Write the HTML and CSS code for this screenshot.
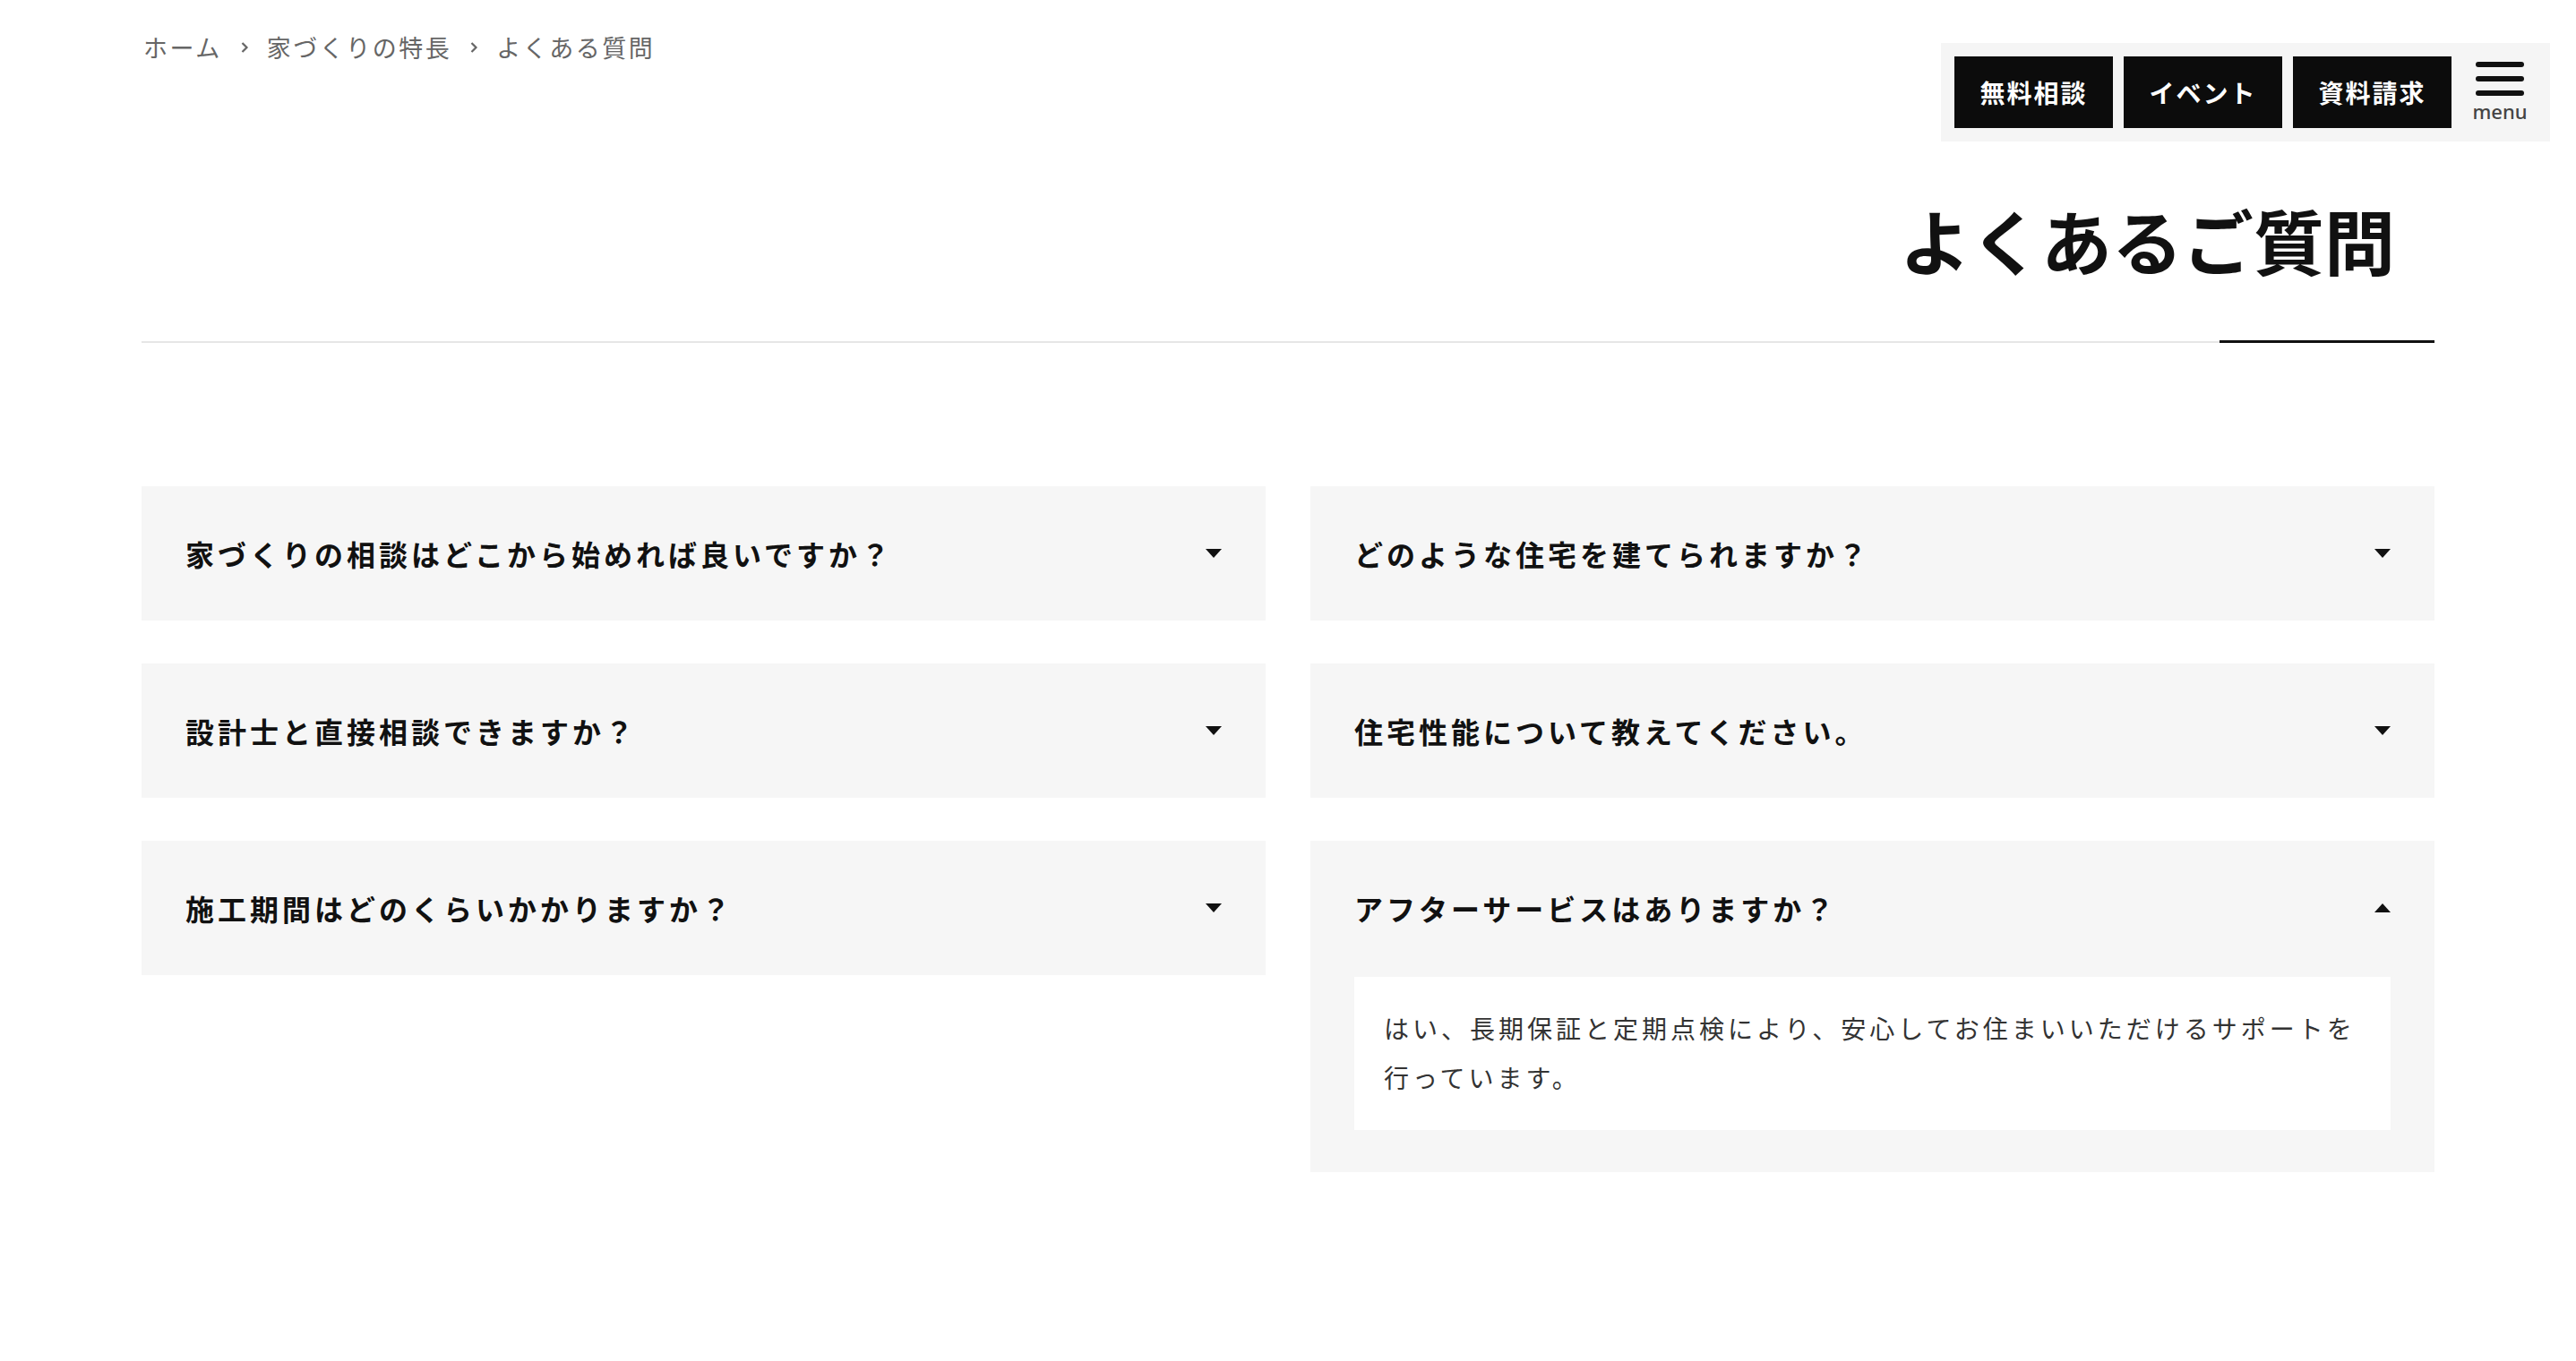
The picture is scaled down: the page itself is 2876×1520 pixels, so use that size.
FILE: index.html
```html
<!DOCTYPE html>
<html lang="ja">
<head>
<meta charset="utf-8">
<title>よくあるご質問</title>
<link rel="stylesheet" href="styles.css">
</head>
<body>
<header class="site-header">
  <nav class="header-actions">
    <a class="cta" href="#">無料相談</a>
    <a class="cta" href="#">イベント</a>
    <a class="cta" href="#">資料請求</a>
    <button class="menu-btn" type="button">
      <span class="bars"><i></i><i></i><i></i></span>
      <span class="menu-label">menu</span>
    </button>
  </nav>
</header>
<main class="page">
  <ol class="breadcrumb">
    <li><a href="#">ホーム</a></li>
    <li class="sep"><svg viewBox="0 0 10 16" width="10" height="16"><path d="M2.5 3 L7.5 8 L2.5 13" fill="none" stroke="#666" stroke-width="2.2"/></svg></li>
    <li><a href="#">家づくりの特長</a></li>
    <li class="sep"><svg viewBox="0 0 10 16" width="10" height="16"><path d="M2.5 3 L7.5 8 L2.5 13" fill="none" stroke="#666" stroke-width="2.2"/></svg></li>
    <li>よくある質問</li>
  </ol>
  <div class="page-title"><h1>よくあるご質問</h1></div>
  <section class="faq-grid">
    <div class="faq-item">
      <div class="faq-q"><span>家づくりの相談はどこから始めれば良いですか？</span><svg class="arrow" viewBox="0 0 20 11"><polygon points="0,0 20,0 10,11"/></svg></div>
    </div>
    <div class="faq-item">
      <div class="faq-q"><span>どのような住宅を建てられますか？</span><svg class="arrow" viewBox="0 0 20 11"><polygon points="0,0 20,0 10,11"/></svg></div>
    </div>
    <div class="faq-item">
      <div class="faq-q"><span>設計士と直接相談できますか？</span><svg class="arrow" viewBox="0 0 20 11"><polygon points="0,0 20,0 10,11"/></svg></div>
    </div>
    <div class="faq-item">
      <div class="faq-q"><span>住宅性能について教えてください。</span><svg class="arrow" viewBox="0 0 20 11"><polygon points="0,0 20,0 10,11"/></svg></div>
    </div>
    <div class="faq-item">
      <div class="faq-q"><span>施工期間はどのくらいかかりますか？</span><svg class="arrow" viewBox="0 0 20 11"><polygon points="0,0 20,0 10,11"/></svg></div>
    </div>
    <div class="faq-item open">
      <div class="faq-q"><span>アフターサービスはありますか？</span><svg class="arrow" viewBox="0 0 20 11"><polygon points="0,11 20,11 10,0"/></svg></div>
      <div class="faq-a"><p>はい、長期保証と定期点検により、安心してお住まいいただけるサポートを行っています。</p></div>
    </div>
  </section>
</main>
</body>
</html>
```

FILE: styles.css
```css
* { box-sizing: border-box; }
html, body { margin: 0; padding: 0; background: #fff; }
body {
  font-family: "Noto Sans CJK JP", "Noto Sans", sans-serif;
  color: #111;
}
a { color: inherit; text-decoration: none; }

.site-header {
  position: absolute;
  top: 48px;
  right: 29px;
}
.header-actions {
  display: flex;
  align-items: center;
  background: #f5f5f5;
  padding: 15px 28px 15px 15px;
  gap: 12px;
}
.cta {
  display: flex;
  align-items: center;
  justify-content: center;
  width: 177px;
  height: 80px;
  background: #0c0c0c;
  color: #fff;
  font-size: 28px;
  font-weight: 700;
  letter-spacing: 2px;
}
.menu-btn {
  margin-left: 14px;
  width: 56px;
  padding: 0;
  border: 0;
  background: none;
  display: flex;
  flex-direction: column;
  align-items: center;
  cursor: pointer;
}
.bars { display: flex; flex-direction: column; gap: 10px; width: 54px; }
.bars i { display: block; height: 6px; border-radius: 3px; background: #111; }
.menu-label {
  margin-top: 4px;
  font-family: "Noto Sans", sans-serif;
  font-size: 22px;
  font-weight: 500;
  line-height: 26px;
  color: #444;
}

.page {
  padding: 0 158px 200px;
}
.breadcrumb {
  list-style: none;
  margin: 0;
  padding: 35px 0 0 2px;
  display: flex;
  align-items: center;
  gap: 20px;
  font-size: 27px;
  line-height: 36px;
  letter-spacing: 2.5px;
  color: #666;
}
.breadcrumb .sep { display: flex; align-items: center; }

.page-title {
  margin-top: 137px;
  padding-bottom: 53px;
  border-bottom: 2px solid #e6e6e6;
  position: relative;
}
.page-title::after {
  content: "";
  position: absolute;
  right: 0;
  bottom: -2px;
  width: 240px;
  height: 3px;
  background: #111;
}
.page-title h1 {
  margin: 0;
  text-align: right;
  padding-right: 44px;
  font-size: 79px;
  line-height: 120px;
  font-weight: 700;
  letter-spacing: 0;
  color: #111;
}

.faq-grid {
  margin-top: 160px;
  display: grid;
  grid-template-columns: 1fr 1fr;
  column-gap: 50px;
  row-gap: 48px;
  align-items: start;
}
.faq-item {
  background: #f6f6f6;
}
.faq-q {
  height: 150px;
  padding: 0 49px;
  display: flex;
  align-items: center;
  justify-content: space-between;
  font-size: 32px;
  font-weight: 700;
  letter-spacing: 4px;
  color: #111;
}
.arrow { width: 18px; height: 10px; fill: #111; flex: none; }
.faq-a {
  padding: 2px 49px 47px;
}
.faq-a p {
  margin: 0;
  background: #fff;
  padding: 30px 33px 31px;
  font-size: 28px;
  line-height: 55px;
  letter-spacing: 4px;
  color: #333;
}
```
